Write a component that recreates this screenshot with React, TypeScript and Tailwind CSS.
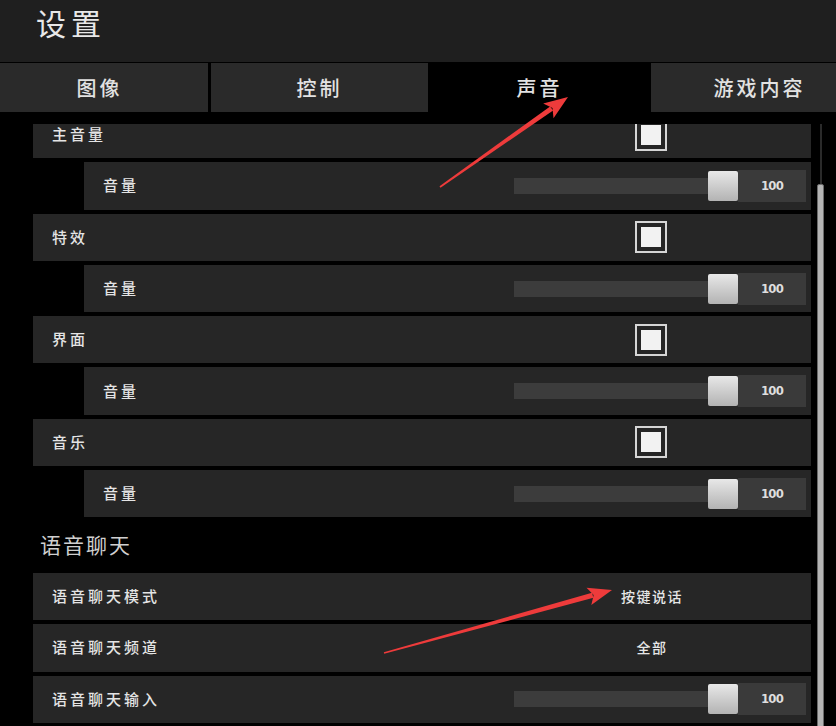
import React from "react";

function Arrow({ x1, y1, x2, y2 }: { x1: number; y1: number; x2: number; y2: number }) {
  const dx = x2 - x1;
  const dy = y2 - y1;
  const len = Math.hypot(dx, dy);
  const ux = dx / len;
  const uy = dy / len;
  const px = -uy;
  const py = ux;
  const hl = 24;
  const hw = 9;
  const bx = x2 - ux * hl;
  const by = y2 - uy * hl;
  const pts = (arr: number[][]) => arr.map((p) => `${p[0].toFixed(1)},${p[1].toFixed(1)}`).join(" ");
  const shaft = pts([
    [x1 + px * 0.8, y1 + py * 0.8],
    [bx + ux * 4 + px * 2.6, by + uy * 4 + py * 2.6],
    [bx + ux * 4 - px * 2.6, by + uy * 4 - py * 2.6],
    [x1 - px * 0.8, y1 - py * 0.8],
  ]);
  const head = pts([
    [bx + px * hw, by + py * hw],
    [x2, y2],
    [bx - px * hw, by - py * hw],
    [bx + ux * 5, by + uy * 5],
  ]);
  return (
    <g fill="#ee3b3b">
      <polygon points={shaft} />
      <polygon points={head} />
    </g>
  );
}

function Checkbox() {
  return (
    <div className="ml-[121px] w-[32px] h-[32px] border-2 border-[#d6d6d6] p-[4px]">
      <div className="w-full h-full bg-[#f2f2f2]" />
    </div>
  );
}

function Slider() {
  return (
    <div className="flex items-center">
      <div className="w-[194px] h-[16px] bg-[#3c3c3c]" />
      <div className="w-[30px] h-[30px] rounded-[2px] bg-gradient-to-b from-[#e8e8e8] to-[#b3b3b3]" />
      <div className="w-[68px] h-[32px] bg-[#3a3a3a] flex items-center justify-center text-[13px] font-semibold text-[#dedede] font-['Liberation_Sans_Narrow','DejaVu_Sans_Condensed',sans-serif] tracking-[-0.8px]">
        100
      </div>
    </div>
  );
}

function TextValue({ text }: { text: string }) {
  return (
    <div className="w-[276px] flex justify-center text-[14px] font-medium tracking-[1.5px] text-[#e6e6e6]">
      {text}
    </div>
  );
}

function Row({
  label,
  sub,
  children,
}: {
  label: string;
  sub?: boolean;
  children?: React.ReactNode;
}) {
  return (
    <div
      className={`${sub ? "ml-[51px]" : ""} h-[47.3px] shrink-0 bg-[#262626] flex items-center pl-[19px] pr-[5px]`}
    >
      <div className="flex-1 text-[15px] leading-[18px] font-medium tracking-[3px] text-[#e4e4e4] mt-[-1px]">
        {label}
      </div>
      <div className="w-[292px] flex items-center">{children}</div>
    </div>
  );
}

export default function App() {
  const tabs = ["图像", "控制", "声音", "游戏内容"];
  return (
    <div className="relative w-[836px] h-[726px] overflow-hidden bg-black font-['Noto_Sans_CJK_SC','Noto_Sans',sans-serif]">
      {/* Header */}
      <div className="h-[62px] bg-[#1f1f1f] flex items-start pl-[36px]">
        <span className="text-[30px] tracking-[5px] text-[#e8e8e8] leading-[44px]">设置</span>
      </div>
      {/* Tabs */}
      <div className="mt-[1px] h-[49px] flex gap-[3px] ml-[-9px]">
        {tabs.map((t, i) => (
          <div
            key={t}
            className={`w-[217px] shrink-0 flex items-center justify-center text-[20px] font-medium tracking-[3px] text-[#e2e2e2] ${
              i === 2 ? "bg-black" : "bg-[#2a2a2a]"
            }`}
          >
            {t}
          </div>
        ))}
      </div>
      {/* Content */}
      <div className="pt-[12px] pl-[33px] w-[811px]">
        <div className="h-[602px] overflow-hidden">
          <div className="flex flex-col gap-[4px] mt-[-13px]">
            <Row label="主音量">
              <Checkbox />
            </Row>
            <Row label="音量" sub>
              <Slider />
            </Row>
            <Row label="特效">
              <Checkbox />
            </Row>
            <Row label="音量" sub>
              <Slider />
            </Row>
            <Row label="界面">
              <Checkbox />
            </Row>
            <Row label="音量" sub>
              <Slider />
            </Row>
            <Row label="音乐">
              <Checkbox />
            </Row>
            <Row label="音量" sub>
              <Slider />
            </Row>
            <div className="h-[47.6px] shrink-0 flex items-center pl-[7px] text-[21px] tracking-[2px] text-[#cfcfcf]">
              语音聊天
            </div>
            <Row label="语音聊天模式">
              <TextValue text="按键说话" />
            </Row>
            <Row label="语音聊天频道">
              <TextValue text="全部" />
            </Row>
            <Row label="语音聊天输入">
              <Slider />
            </Row>
          </div>
        </div>
      </div>
      {/* Scrollbar */}
      <div className="absolute left-[820px] top-[124px] w-[2px] h-[602px] bg-[#2a2a2a]" />
      <div className="absolute left-[817px] top-[184px] w-[7px] h-[560px] bg-[#b4b4b4] border border-[#6a6a6a] rounded-[2px]" />
      {/* Annotation arrows */}
      <svg className="absolute inset-0 pointer-events-none" width={836} height={726}>
        <Arrow x1={440} y1={187} x2={568} y2={97} />
        <Arrow x1={384} y1={653} x2={612} y2={590} />
      </svg>
    </div>
  );
}
